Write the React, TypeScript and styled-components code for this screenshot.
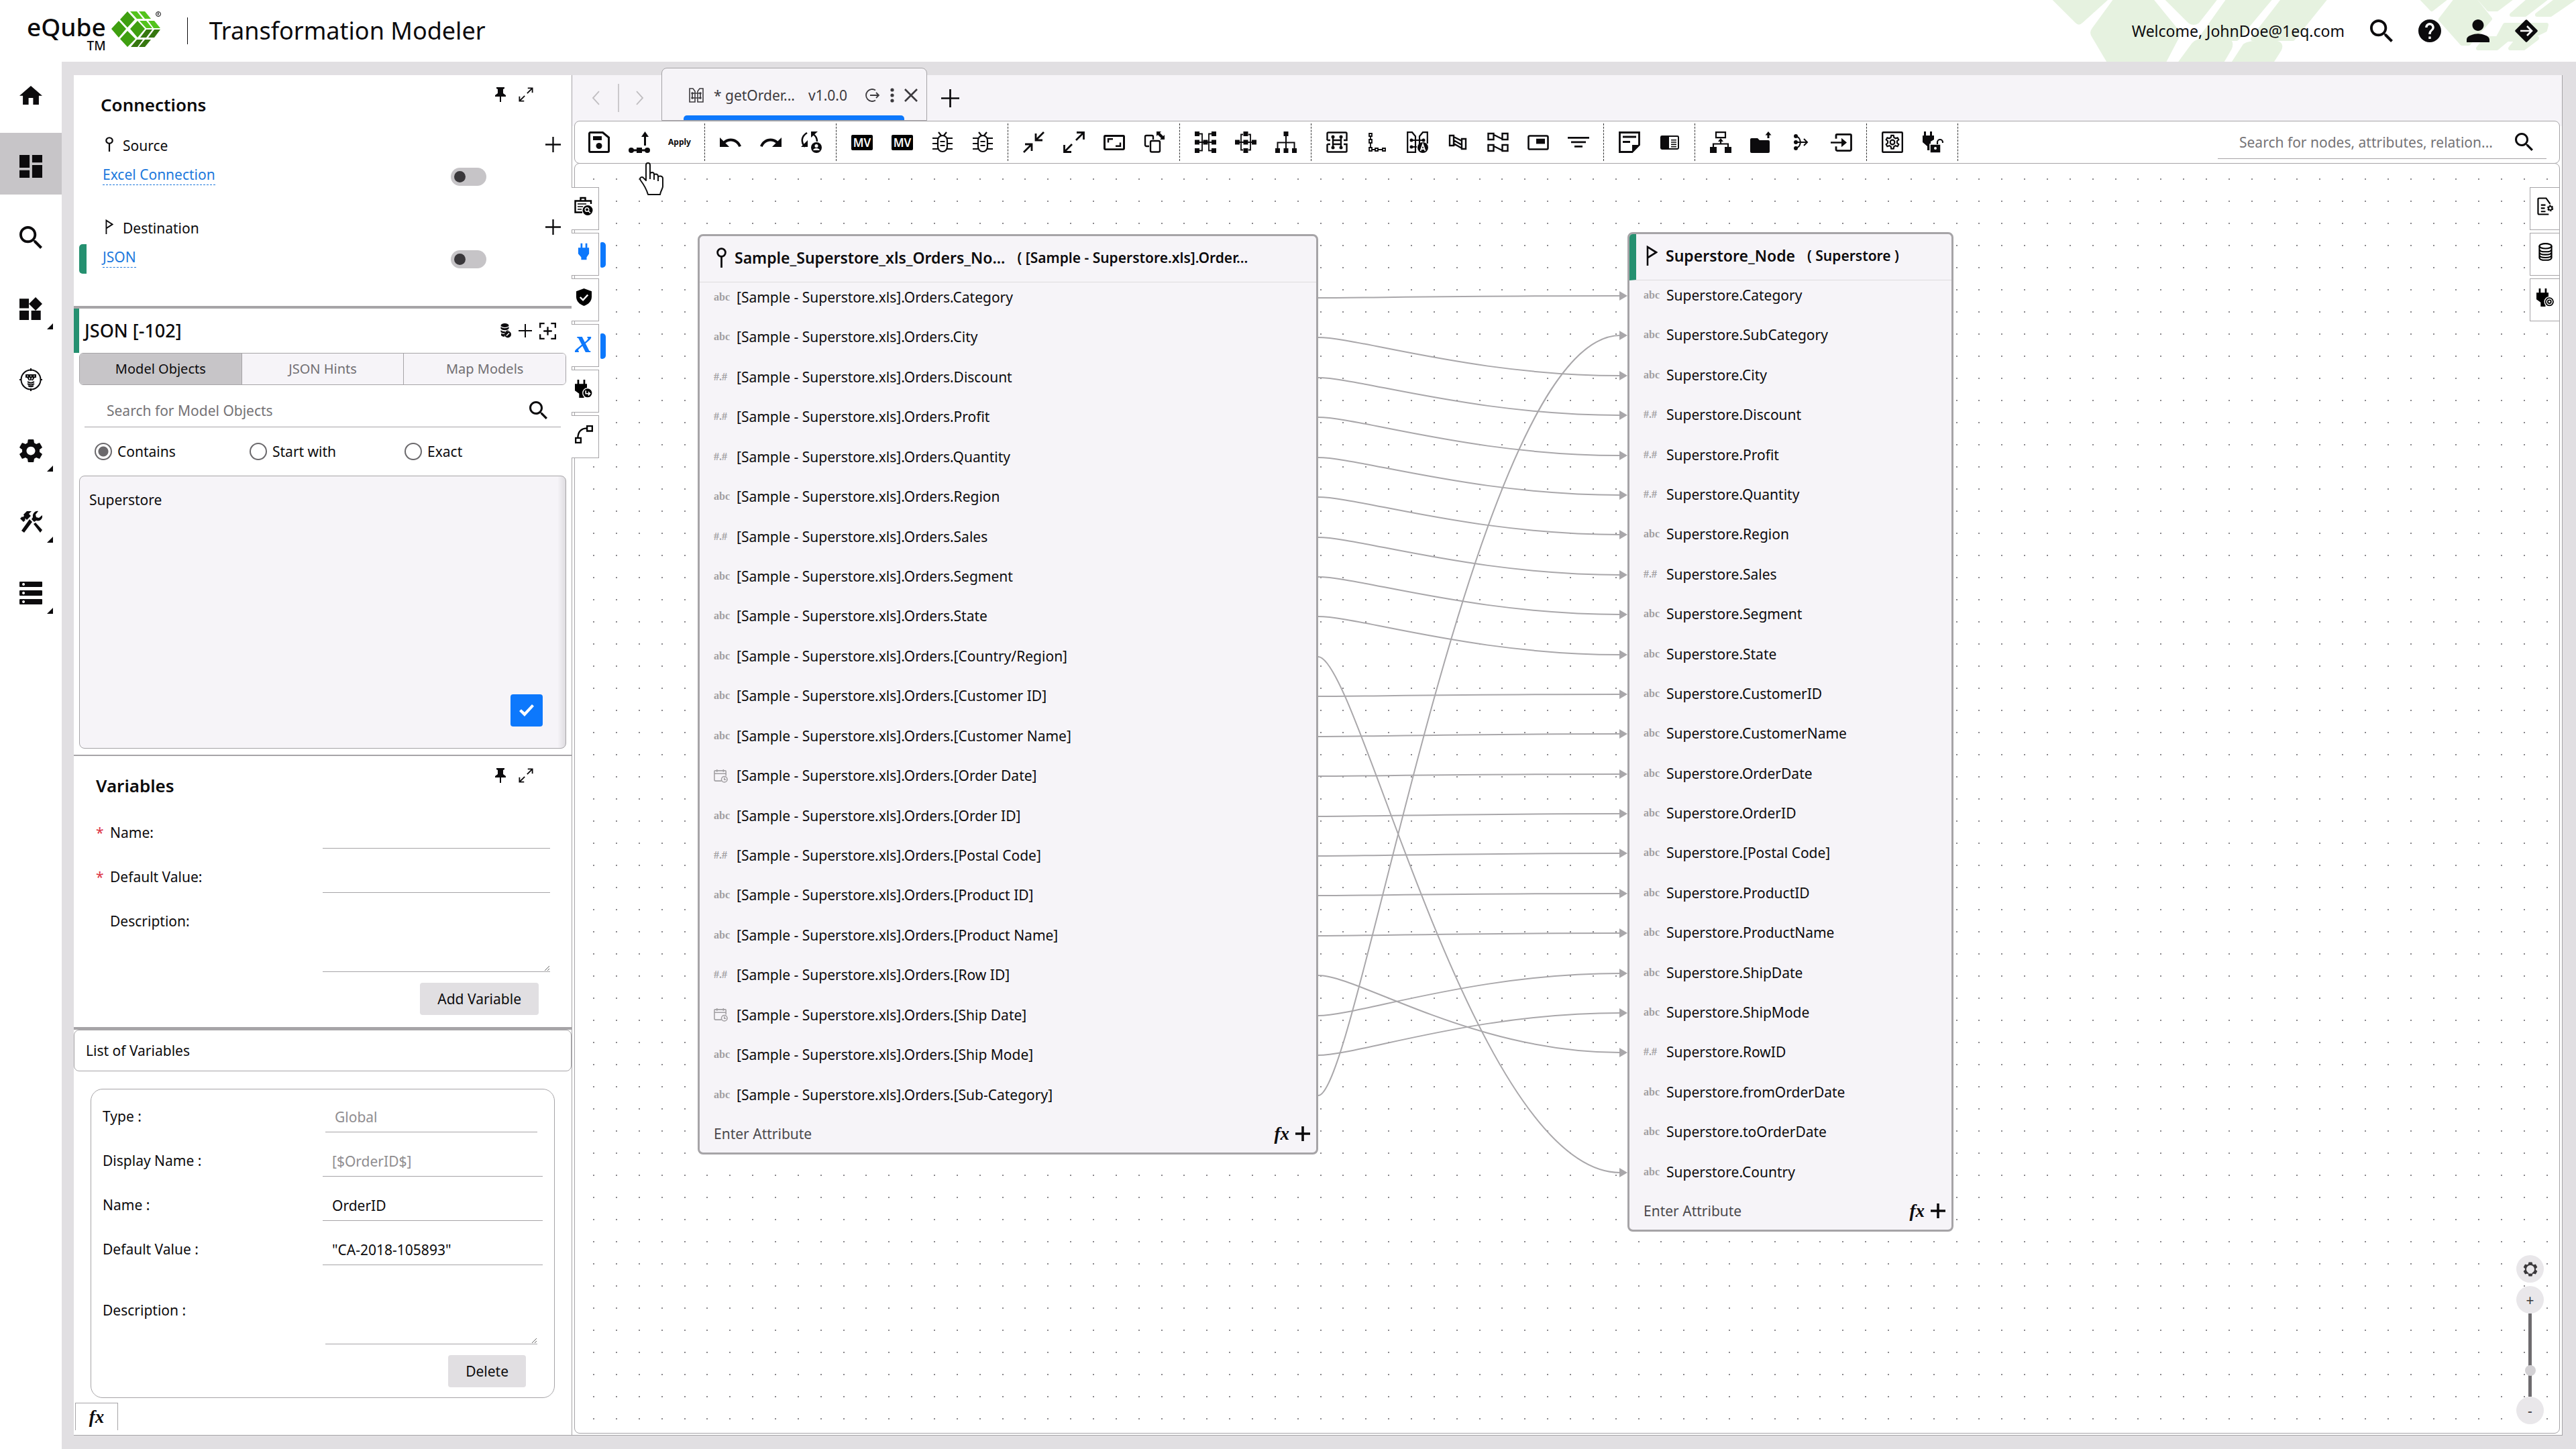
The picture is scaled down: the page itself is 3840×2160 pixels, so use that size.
import React from "react";
import styled, { createGlobalStyle, css } from "styled-components";

const ink = "#0c0b0d";
const line = "#a6a4a7";
const surface = "#f6f4f8";
const chrome = "#e1dfe2";
const blue = "#0d78fc";
const green = "#259070";

const GlobalStyle = createGlobalStyle`
  *, *::before, *::after { box-sizing: border-box; }
  body { margin: 0; background: #fff; }
  body, button, input, textarea {
    font-family: "Noto Sans", "Open Sans", sans-serif;
    font-size: 21px;
    line-height: 28px;
    color: ${ink};
  }
  button { border: 0; padding: 0; background: none; cursor: pointer; }
  h1, h2, h3, ul { margin: 0; padding: 0; font-weight: 600; }
  ul { list-style: none; font-weight: 400; }
  svg { display: block; flex: none; }
`;

/* ---------- icons ---------- */

type GlyphProps = { name: string; w?: number; h?: number };

const S = (p: React.SVGProps<SVGGElement>) => (
  <g fill="none" stroke="currentColor" strokeWidth={2.4} {...p} />
);

const plugBody = (
  <path d="M8 2h3v7h5V2h3v7h3v10l-4 6v4H9v-4l-5-6V9h4z" />
);

const bug = (
  <S strokeWidth={2.2}>
    <rect x="9" y="6" width="14" height="24" rx="7" />
    <path d="M10 1l4 5M22 1l-4 5M1 10h8M1 18h8M1 26h8M23 10h8M23 18h8M23 26h8M12.500 15h7M12.500 21h7" />
  </S>
);

const gearPath =
  "M19.14 12.94c.04-.3.06-.61.06-.94 0-.32-.02-.64-.07-.94l2.03-1.58c.18-.14.23-.41.12-.61l-1.92-3.32c-.12-.22-.37-.29-.59-.22l-2.39.96c-.5-.38-1.03-.7-1.62-.94l-.36-2.54c-.04-.24-.24-.41-.48-.41h-3.84c-.24 0-.43.17-.47.41l-.36 2.54c-.59.24-1.13.57-1.62.94l-2.39-.96c-.22-.08-.47 0-.59.22L2.74 8.87c-.12.21-.08.47.12.61l2.03 1.58c-.05.3-.09.63-.09.94s.02.64.07.94l-2.03 1.58c-.18.14-.23.41-.12.61l1.92 3.32c.12.22.37.29.59.22l2.39-.96c.5.38 1.03.7 1.62.94l.36 2.54c.05.24.24.41.48.41h3.84c.24 0 .44-.17.47-.41l.36-2.54c.59-.24 1.13-.56 1.62-.94l2.39.96c.22.08.47 0 .59-.22l1.92-3.32c.12-.22.07-.47-.12-.61l-2.01-1.58zM12 15.6c-1.98 0-3.6-1.62-3.6-3.6s1.62-3.6 3.6-3.6 3.6 1.62 3.6 3.6-1.62 3.6-3.6 3.6z";

const glyphs: Record<string, [string, React.ReactNode]> = {
  home: ["2 3 20 17", <path d="M10 20v-6h4v6h5v-8h3L12 3 2 12h3v8z" />],
  dashboard: ["3 3 18 18", <path d="M3 13h8V3H3v10zm0 8h8v-6H3v6zm10 0h8V11h-8v10zm0-18v6h8V3h-8z" />],
  search: [
    "3 3 17.500 17.500",
    <path d="M15.5 14h-.79l-.28-.27C15.41 12.59 16 11.11 16 9.5 16 5.91 13.09 3 9.500 3S3 5.91 3 9.500 5.91 16 9.500 16c1.61 0 3.09-.59 4.23-1.57l.27.28v.79l5 4.99L20.490 19l-4.990-5zm-6 0C7.010 14 5 11.990 5 9.500S7.010 5 9.500 5 14 7.010 14 9.500 11.990 14 9.500 14z" />,
  ],
  widgets: ["3 1.700 19.300 19.300", <path d="M13 13v8h8v-8h-8zM3 21h8v-8H3v8zM3 3v8h8V3H3zm13.66-1.31L11 7.34 16.66 13l5.66-5.66-5.66-5.65z" />],
  bot: [
    "0 0 34 34",
    <>
      <S strokeWidth={2}>
        <circle cx="17" cy="17" r="14.500" />
        <path d="M17 0v4M17 30v4M0 17h3M31 17h3M10 10h4v3h-4zM15 10h4v3h-4zM20 10h4v3h-4zM12 13l3 5M17 13v5M22 13l-3 5" />
        <path d="M12 20c3 2 7 2 10 0M12 23c3 2 7 2 10 0M13 26c3 2 5 2 8 0" />
      </S>
    </>,
  ],
  gear: ["2.600 2.400 18.800 19.200", <path d={gearPath} />],
  tools: [
    "0 0 34 34",
    <>
      <path d="M1 12l3-3 1 1 2-2-1-2 5-5h7l-4 4 3 3-6 6-2-2-1 1 1 1-3 3z" />
      <path d="M15 13l4 4L7 33l-4-3z" />
      <path d="M28 1l-4 5 1 4 4 1 5-4c1 5-3 10-9 8l-3 2-4-4 2-3c-1-6 4-10 8-9zM21 20l3-2 10 11-3 4z" />
    </>,
  ],
  server: [
    "0 0 34 34",
    <>
      {[0, 13, 26].map((y) => (
        <path key={y} fillRule="evenodd" d={`M1 ${y}h32a1 1 0 0 1 1 1v6a1 1 0 0 1-1 1H1a1 1 0 0 1-1-1v-6a1 1 0 0 1 1-1zM6 ${y + 2}a2 2 0 1 0 .1 0z`} />
      ))}
    </>,
  ],
  corner: ["0 0 9 9", <path d="M9 0v9H0z" />],
  help: ["2 2 20 20", <path d="M12 2C6.48 2 2 6.48 2 12s4.48 10 10 10 10-4.48 10-10S17.52 2 12 2zm1 17h-2v-2h2v2zm2.07-7.75l-.9.92C13.45 12.9 13 13.5 13 15h-2v-.5c0-1.1.45-2.1 1.17-2.83l1.24-1.26c.37-.36.59-.86.59-1.41 0-1.1-.9-2-2-2s-2 .9-2 2H8c0-2.21 1.79-4 4-4s4 1.79 4 4c0 .88-.36 1.68-.93 2.25z" />],
  person: ["4 4 16 16", <path d="M12 12c2.21 0 4-1.79 4-4s-1.79-4-4-4-4 1.79-4 4 1.79 4 4 4zm0 2c-2.67 0-8 1.34-8 4v2h16v-2c0-2.66-5.33-4-8-4z" />],
  leave: [
    "0 0 34 34",
    <>
      <path d="M15.500 1a2 2 0 0 1 3 0L33 15.500a2 2 0 0 1 0 3L18.500 33a2 2 0 0 1-3 0L1 18.500a2 2 0 0 1 0-3z" />
      <path d="M8 17h16M18 10l7 7-7 7" fill="none" stroke="#fff" strokeWidth={2.6} />
    </>,
  ],
  pin: ["0 0 16 22", <path d="M2 0h12v2l-2 1v6l4 3v2H9v8H7v-8H0v-2l4-3V3L2 2z" />],
  expand: ["0 0 24 24", <S strokeWidth={2}><path d="M15 1.500h7.500V9M22 2l-8 8M9 22.500H1.500V15M2 22l8-8" /></S>],
  source: ["0 0 14 28", <S strokeWidth={2.6}><circle cx="7" cy="7" r="5.500" /><path d="M7 12.500V28" /></S>],
  flag: ["0 0 17 28", <S strokeWidth={2.6}><path d="M2 28V2l13 7.500L2 17" /></S>],
  plus: ["0 0 24 24", <S strokeWidth={2.4}><path d="M12 0v24M0 12h24" /></S>],
  boldPlus: ["0 0 22 22", <S strokeWidth={3.6}><path d="M11 0v22M0 11h22" /></S>],
  dbEdit: [
    "0 0 16 22",
    <>
      <ellipse cx="6.500" cy="3" rx="6" ry="3" />
      <path d="M0.500 5c3 3 9 3 12 0v3c-3 3-9 3-12 0zM0.500 10c3 3 9 3 12 0-4 0-6 3-6 5-3 0-5-1-6-2zM1 15c2 1 4 1 5 1v4c-2 0-4-1-5-2z" />
      <circle cx="11" cy="16.500" r="5" />
      <path d="M9 18.500l4-4" stroke="#fff" strokeWidth={1.6} />
    </>,
  ],
  focus: ["0 0 26 26", <S><path d="M1.200 8V1.200H8M18 1.200h6.800V8M24.800 18v6.800H18M8 24.800H1.200V18M13 6.500v13M6.500 13h13" /></S>],
  check: ["0 0 22 20", <path d="M0 11l3-3 5 5L19 0l3 3L8 20z" />],
  save: [
    "0 0 32 32",
    <>
      <S strokeWidth={3}><path d="M3 1.500h18.500L30.500 9v20a1.500 1.500 0 0 1-1.500 1.500H3A1.500 1.500 0 0 1 1.500 29V3A1.500 1.500 0 0 1 3 1.500z" /></S>
      <path d="M7 7h13v6H7z" /><circle cx="16" cy="21.500" r="4.500" />
    </>,
  ],
  deploy: [
    "0 0 32 32",
    <>
      <path d="M24.500 0l5.500 8h-4v13h-3V8h-4z" />
      <circle cx="4" cy="28" r="4" /><circle cx="28" cy="28" r="4" />
      <path d="M4 26.500h24v3H4zM12 24h8v8h-8z" />
    </>,
  ],
  undo: ["2 7 20.500 9", <path d="M12.5 8c-2.65 0-5.05.99-6.9 2.6L2 7v9h9l-3.62-3.62c1.39-1.16 3.16-1.88 5.12-1.88 3.54 0 6.550 2.310 7.600 5.500l2.370-.780C21.080 11.030 17.150 8 12.500 8z" />],
  redo: ["1.500 7 20.500 9", <path d="M18.400 10.600C16.550 8.990 14.150 8 11.500 8c-4.650 0-8.580 3.030-9.960 7.220L3.900 16c1.050-3.190 4.050-5.500 7.600-5.500 1.950 0 3.730.72 5.120 1.880L13 16h9V7l-3.600 3.600z" />],
  userSync: [
    "0 0 32 32",
    <>
      <S strokeWidth={2.6}><path d="M10 2C2 7 0 15 7 23M19 4c5 3 6 7 6 11" /></S>
      <path d="M1 23h10V13zM16 0h10l-10 9z" />
      <circle cx="24" cy="24" r="8" />
      <circle cx="24" cy="21.500" r="2.500" fill="#fff" /><path d="M19 28c1-4 9-4 10 0z" fill="#fff" />
    </>,
  ],
  bug: ["0 0 32 32", bug],
  collapse: ["0 0 32 32", <S strokeWidth={2.8}><path d="M31 1L19 13M19 3v10h10M1 31l12-12M3 19h10v10" /></S>],
  expandBig: ["0 0 32 32", <S strokeWidth={2.8}><path d="M19 13L30 2M20 1.500h10.500V12M13 19L2 30M1.500 20v10.500H12" /></S>],
  aspect: ["0 0 32 24", <><S strokeWidth={3}><rect x="1.500" y="1.500" width="29" height="21" rx="1" /></S><S><path d="M7 12V6.500h7M25 12v5.500h-7" /></S></>],
  popout: [
    "0 0 32 32",
    <>
      <S><path d="M8 22H4a2 2 0 0 1-2-2V8a2 2 0 0 1 2-2h8a2 2 0 0 1 2 2v4" /><rect x="10" y="14" width="14" height="16.500" rx="2" /></S>
      <path d="M19 0h7l-2 2 5 5 2-2v7h-7l2-2-5-5-2 2z" />
    </>,
  ],
  mapAll: [
    "0 0 32 32",
    <>
      <path d="M0 0h7v7H0zM25 0h7v7h-7zM0 12.500h7v7H0zM12.500 12.500h7v7h-7zM25 12.500h7v7h-7zM0 25h7v7H0zM25 25h7v7h-7z" />
      <S strokeWidth={1.800}><path d="M7 3.500h4v25H7M25 3.500h-4v25h4M7 16h18" /></S>
    </>,
  ],
  mapCenter: [
    "0 0 32 32",
    <>
      <path d="M12.500 0h7v7h-7zM0 12.500h7v7H0zM12.500 12.500h7v7h-7zM25 12.500h7v7h-7zM12.500 25h7v7h-7z" />
      <S strokeWidth={1.800}><path d="M12 4.500H9v23h3M20 4.500h3v23h-3M7 16h18" /></S>
    </>,
  ],
  tree: [
    "0 0 32 32",
    <>
      <path d="M12.500 0h7v7h-7zM0 25h7v7H0zM12.500 25h7v7h-7zM25 25h7v7h-7z" />
      <S strokeWidth={2}><path d="M16 7v18M3.500 25v-8.500h25V25" /></S>
    </>,
  ],
  brackets: [
    "0 0 32 32",
    <>
      <S><path d="M1.500 13V3A1.500 1.500 0 0 1 3 1.500h26A1.500 1.500 0 0 1 30.500 3v10H26M1.500 13H6M1.500 19v10A1.500 1.500 0 0 0 3 30.500h26a1.500 1.500 0 0 0 1.500-1.500V19H26M1.500 19H6M10 8v16M22 8v16M10 13h12M10 19h12" /></S>
      <circle cx="10" cy="8" r="2.500" /><circle cx="22" cy="8" r="2.500" /><circle cx="10" cy="24" r="2.500" /><circle cx="22" cy="24" r="2.500" />
    </>,
  ],
  chain: ["0 0 32 32", <S strokeWidth={1.800}><path d="M6 2v26M4 27h24" /><path fill="#fff" d="M4 3h4v4H4zM4 12h4v5H4zM4 24h4v5H4zM13 25h4v4h-4zM24 25h4v4h-4z" /></S>],
  autoMap: [
    "0 0 32 32",
    <>
      <S strokeWidth={2.200}><path d="M1.200 1.200H8l5 6v23.600H1.200zM30.800 18V1.200H24l-5 6V20M7 13h18M7 23h8" /></S>
      <circle cx="7" cy="13" r="2.500" /><circle cx="25" cy="13" r="2.500" /><circle cx="7" cy="23" r="2.500" />
      <circle cx="24" cy="24" r="8" />
      <path d="M20.500 29l3.500-10 3.500 10M21.500 26h5" fill="none" stroke="#fff" strokeWidth={1.800} />
    </>,
  ],
  link: ["0 0 32 32", <S><path d="M4 6h6v15H4zM22 11h6v15h-6zM10 8l12 6M10 13l12 7M10 18l12 7" /></S>],
  crossMap: ["0 0 32 32", <S><path d="M1.500 3h8v9h-8zM22.500 3h8v9h-8zM1.500 20h8v9h-8zM22.500 20h8v9h-8zM10 5l12 6M10 22l12 6" /></S>],
  preview: ["0 0 32 24", <><S strokeWidth={2.600}><rect x="1.500" y="1.500" width="29" height="21" rx="2" /></S><path d="M13 6h13v8H13z" /></>],
  filter: ["0 0 32 16", <path d="M0 0h32v2.800H0zM5 6.500h22v2.800H5zM10 13h12v2.800H10z" />],
  note: ["0 0 32 32", <><S><path d="M1.500 1.500h29V20L20 30.500H1.500zM6 8h20M6 15.500h11" strokeWidth={2.800} /></S><path d="M20 31V20h11z" /></>],
  reader: ["0 0 28 22", <><S strokeWidth={2}><rect x="1" y="1" width="26" height="20" rx="1.500" /><path d="M16 7h8M16 10.500h8M16 14h8M16 17.500h8" strokeWidth={1.600} /></S><path d="M1 1h12v20H1z" /></>],
  hierarchy: [
    "0 0 32 32",
    <>
      <S strokeWidth={2.200}><path d="M9 1.200h14v8H9zM16 13v5M5 23v-4.500h22V23" /></S>
      <path d="M16 10l4 5h-8zM0 23h10v9H0zM22 23h10v9H22z" />
    </>,
  ],
  folderUp: ["0 0 32 32", <path d="M2 10h9l3 3h13a2 2 0 0 1 2 2v15a2 2 0 0 1-2 2H2a2 2 0 0 1-2-2V12a2 2 0 0 1 2-2zM27 0l4.500 5.500h-3V10h-3V5.500h-3z" />],
  merge: [
    "0 0 32 32",
    <>
      <S strokeWidth={2}><path d="M8 7c6 2 6 5 7 9M8 25c6-2 6-5 7-9M6 16h18M20 11l5 5-5 5" /></S>
      <circle cx="8" cy="7" r="3" /><circle cx="8" cy="16" r="3" /><circle cx="8" cy="25" r="3" />
    </>,
  ],
  login: ["0 0 32 28", <><S strokeWidth={2.800}><path d="M8 8V3a1.500 1.500 0 0 1 1.500-1.500h19.500A1.500 1.500 0 0 1 30.500 3v22a1.500 1.500 0 0 1-1.500 1.500H9.500A1.500 1.500 0 0 1 8 25v-5M0 14h18" /></S><path d="M16 7l8 7-8 7z" /></>],
  gearBox: [
    "0 0 32 32",
    <>
      <S><rect x="1.200" y="1.200" width="29.600" height="29.600" rx="1" /></S>
      <S strokeWidth={1.900} transform="translate(2.500 2.500) scale(1.125)">
        <path d="M10.500 3h3l.6 2.800 2 1.100 2.700-.9 1.500 2.600-2.100 1.900v2.500l2.100 1.900-1.500 2.600-2.700-.9-2 1.100-.6 2.800h-3l-.6-2.800-2-1.100-2.700.9-1.500-2.600 2.100-1.900v-2.500L3.700 8.600 5.200 6l2.700.9 2-1.100z" />
        <circle cx="12" cy="12" r="3" />
      </S>
    </>,
  ],
  plugUnlock: [
    "0 0 32 32",
    <>
      <path d="M3 0h3v6h6V0h3v6h3v6l-5 3v13H8v-6l-7-6V6h2z" />
      <path d="M12 19h16v13H12z" stroke="#fff" strokeWidth={1.500} />
      <path d="M23 19v-3a4 4 0 0 1 8 0v1" fill="none" stroke="currentColor" strokeWidth={2.200} />
      <circle cx="20" cy="25" r="2" fill="#fff" />
    </>,
  ],
  chevL: ["0 0 12 20", <S strokeWidth={1.800}><path d="M11 1L2 10l9 9" /></S>],
  chevR: ["0 0 12 20", <S strokeWidth={1.800}><path d="M1 1l9 9-9 9" /></S>],
  model: ["0 0 22 22", <><S strokeWidth={1.600}><path d="M1 1h5l3 4v16H1zM21 1h-5l-3 4v16h8zM5 8h12M5 15h12M5 8v7M17 8v7" /></S><circle cx="5" cy="8" r="1.800" /><circle cx="17" cy="8" r="1.800" /><circle cx="5" cy="15" r="1.800" /><circle cx="17" cy="15" r="1.800" /></>],
  exit: ["0 0 22 22", <S strokeWidth={1.800}><path d="M15 3.500A9 9 0 1 0 15 18.500M7 11h13M16 7l4 4-4 4" /></S>],
  kebab: ["0 0 6 22", <><circle cx="3" cy="3" r="2.600" /><circle cx="3" cy="11" r="2.600" /><circle cx="3" cy="19" r="2.600" /></>],
  close: ["0 0 20 20", <S strokeWidth={2.600}><path d="M1 1l18 18M19 1L1 19" /></S>],
  caseSearch: [
    "0 0 28 28",
    <>
      <S><path d="M25 11V6.500H1.500v17H12M9.500 6V2h7v4" /><path d="M5 11h13M5 15h8M5 19h6" strokeWidth={1.600} /></S>
      <circle cx="20" cy="20.500" r="7.500" /><circle cx="19" cy="19.500" r="2.800" fill="none" stroke="#fff" strokeWidth={1.400} /><path d="M21 21.500l3 3" stroke="#fff" strokeWidth={1.400} />
    </>,
  ],
  plug: ["3 0 20 31", plugBody],
  shield: ["0 0 24 30", <><path d="M12 0l12 5v9c0 8-5 13-12 16C5 27 0 22 0 14V5z" /><path d="M6 15l4.500 5L18 11" fill="none" stroke="#fff" strokeWidth={2.600} /></>],
  plugSwap: ["0 0 30 30", <><path d="M4 0h3v7h7V0h3v7h3v9l-5 7v7H7v-7l-7-5V7h4z" /><circle cx="21" cy="22" r="8" stroke="#fff" strokeWidth={1.500} /><path d="M18 18v5h7M22 20l3 3-3 3" fill="none" stroke="#fff" strokeWidth={1.800} /></>],
  plugGear: ["0 0 30 30", <><path d="M4 0h3v7h7V0h3v7h3v9l-5 7v7H7v-7l-7-5V7h4z" /><circle cx="21.500" cy="22" r="8" stroke="#fff" strokeWidth={1.500} /><circle cx="21.500" cy="22" r="4.500" fill="none" stroke="#fff" strokeWidth={1.600} /><circle cx="21.500" cy="22" r="1.600" fill="#fff" /></>],
  curve: ["0 0 28 28", <S><path d="M1.200 19.500h8v7.300h-8zM18.800 1.200h8v7.600h-8zM4.500 19C5 10 10 5 18 4.500" /></S>],
  docGear: ["0 0 26 28", <><S strokeWidth={2.200}><path d="M20 10L14 1.500H3A1.500 1.500 0 0 0 1.500 3v22A1.500 1.500 0 0 0 3 26.500h15M20 10v1M6 12h7M6 17h6M6 22h7" /></S><circle cx="20.500" cy="17" r="3.500" fill="none" stroke="currentColor" strokeWidth={2.600} strokeDasharray="2.600 1" /><circle cx="20.500" cy="17" r="2.600" fill="none" stroke="currentColor" strokeWidth={1.400} /></>],
  database: ["0 0 22 28", <S strokeWidth={2.200}><ellipse cx="11" cy="5" rx="9.500" ry="3.800" /><path d="M1.500 5v18c0 5 19 5 19 0V5M1.500 10c0 5 19 5 19 0M1.500 14.500c0 5 19 5 19 0M1.500 19c0 5 19 5 19 0" /></S>],
  date: ["0 0 22 22", <S strokeWidth={1.600}><path d="M12 19H3a2 2 0 0 1-2-2V4a1 1 0 0 1 1-1h16a1 1 0 0 1 1 1v7M1 7.500h18M5 1v4M15 1v4" /><circle cx="16.500" cy="16.500" r="4.500" /><path d="M16.500 14v3h2.500" /></S>],
  recenter: [
    "0 0 22 22",
    <>
      <circle cx="11" cy="11" r="7" fill="none" stroke="currentColor" strokeWidth={2} strokeDasharray="38 6" strokeDashoffset={-14} />
      {[0, 60, 120, 180, 240, 300].map((a) => (
        <path key={a} d="M8.500 0.500h5l1 4h-7z" transform={`rotate(${a} 11 11)`} />
      ))}
    </>,
  ],
};

const Glyph = ({ name, w = 32, h = w }: GlyphProps) => (
  <svg width={w} height={h} viewBox={glyphs[name][0]} fill="currentColor" preserveAspectRatio="none" aria-hidden="true">
    {glyphs[name][1]}
  </svg>
);

/* ---------- page frame ---------- */

const Page = styled.div`
  display: flex;
  flex-direction: column;
  min-height: 100vh;
`;

const TopBar = styled.header`
  position: relative;
  display: flex;
  align-items: center;
  height: 92px;
  padding: 0 57px 0 40px;
`;

const Backdrop = styled.svg`
  position: absolute;
  top: 0;
  right: 0;
`;

const Brand = styled.div`
  display: flex;
  gap: 7px;
  padding-right: 38px;
  border-right: 1px solid ${ink};
`;

const BrandWords = styled.div`
  display: flex;
  flex-direction: column;
  align-items: flex-end;
  height: 40px;
`;

const BrandName = styled.span`
  font-size: 37px;
  font-weight: 500;
  line-height: 28px;
`;

const BrandMark = styled.span`
  font-size: 19px;
  font-weight: 500;
  line-height: 28px;
`;

const LogoSlot = styled.div`
  height: 40px;
  svg { margin-top: -10px; }
`;

const AppTitle = styled.h1`
  flex: 1;
  padding-left: 32px;
  font-size: 36px;
  font-weight: 400;
  line-height: 44px;
`;

const UserTools = styled.div`
  position: relative;
  display: flex;
  align-items: center;
  gap: 38px;
  font-size: 23px;
`;

const IconButton = styled.button`
  display: flex;
  align-items: center;
  justify-content: center;
  color: inherit;
`;

const Shell = styled.div`
  display: flex;
  flex: 1;
`;

const Rail = styled.nav`
  display: flex;
  flex-direction: column;
  gap: 14px;
  width: 92px;
`;

const RailButton = styled.button<{ $active?: boolean }>`
  position: relative;
  display: flex;
  align-items: center;
  justify-content: center;
  width: 92px;
  height: 92px;
  padding-top: 7px;
  background: ${(p) => (p.$active ? "#c7c5c8" : "transparent")};
`;

const RailCorner = styled.span`
  position: absolute;
  right: 13px;
  bottom: 11px;
`;

const Body = styled.main`
  display: flex;
  flex: 1;
  min-width: 0;
  padding: 20px 20px 20px 18px;
  background: ${chrome};
`;

/* ---------- left column ---------- */

const SideColumn = styled.aside`
  display: flex;
  flex-direction: column;
  width: 742px;
  background: #fff;
  border-bottom: 1px solid ${line};
`;

const Section = styled.section<{ $rule?: number; $grow?: boolean }>`
  display: flex;
  flex-direction: column;
  flex: ${(p) => (p.$grow ? "1" : "none")};
  border-bottom: ${(p) => p.$rule ?? 0}px solid ${line};
`;

const SectionHead = styled.div<{ $inset: number }>`
  display: flex;
  align-items: flex-start;
  justify-content: space-between;
  height: 61px;
  padding: 18px 57px 0 ${(p) => p.$inset}px;
`;

const SectionTitle = styled.h2`
  padding-top: 11px;
  font-size: 26px;
  line-height: 30px;
`;

const HeadActions = styled.div<{ $gap: number }>`
  display: flex;
  align-items: center;
  gap: ${(p) => p.$gap}px;
`;

const Groups = styled.div`
  display: flex;
  flex-direction: column;
  gap: 40px;
  padding: 29px 0 48px;
`;

const GroupHead = styled.div`
  display: flex;
  align-items: center;
  gap: 14px;
  height: 30px;
  margin-bottom: 9px;
  padding: 0 16px 0 47px;
  svg { margin-bottom: 4px; }
  button { margin-left: auto; }
`;

const ConnectionRow = styled.div<{ $selected?: boolean }>`
  display: flex;
  align-items: center;
  justify-content: space-between;
  height: 44px;
  margin-left: 8px;
  padding: 0 127px 0 24px;
  border-left: 11px solid ${(p) => (p.$selected ? green : "transparent")};
  border-radius: 5px 0 0 5px;
`;

const ConnectionLink = styled.a`
  margin-bottom: 6px;
  color: #2079dd;
  line-height: 30px;
  border-bottom: 1px dashed #2079dd;
  text-decoration: none;
`;

const Toggle = styled.input`
  appearance: none;
  width: 53px;
  height: 27px;
  margin: 0;
  padding: 5px;
  border-radius: 14px;
  background: #c6c4c7;
  &::before {
    content: "";
    display: block;
    width: 17px;
    height: 17px;
    border-radius: 50%;
    background: #3a383b;
  }
`;

const JsonHead = styled.div`
  display: flex;
  align-items: center;
  justify-content: space-between;
  height: 66px;
  padding: 0 23px 0 8px;
  border-left: 8px solid ${green};
  h2 { font-size: 27px; font-weight: 500; line-height: 30px; }
`;

const Tabs = styled.div`
  display: flex;
  height: 48px;
  margin: 0 8px;
  border: 1px solid ${line};
  border-radius: 6px;
  overflow: hidden;
`;

const Tab = styled.button<{ $active?: boolean }>`
  flex: 1;
  background: ${(p) => (p.$active ? "#c7c5c8" : surface)};
  color: ${(p) => (p.$active ? ink : "#716f72")};
  font-size: 20px;
  & + & { border-left: 1px solid ${line}; }
`;

const searchField = css`
  display: flex;
  align-items: center;
  border-bottom: 1px solid ${line};
  input {
    flex: 1;
    min-width: 0;
    padding: 0;
    border: 0;
    outline: 0;
    background: none;
  }
  input::placeholder { color: #757376; opacity: 1; }
`;

const ObjectSearch = styled.div`
  ${searchField}
  height: 63px;
  margin: 0 16px;
  padding: 13px 20px 0 33px;
`;

const MatchOptions = styled.div`
  display: grid;
  grid-template-columns: repeat(3, 231px);
  align-items: center;
  height: 72px;
  padding-left: 31px;
`;

const RadioLabel = styled.label`
  display: flex;
  align-items: center;
  gap: 8px;
`;

const Radio = styled.input`
  appearance: none;
  width: 26px;
  height: 26px;
  margin: 0;
  border: 2px solid #6b696c;
  border-radius: 50%;
  &:checked {
    background: radial-gradient(circle, #6b696c 7px, transparent 8px);
  }
`;

const ObjectBox = styled.div`
  position: relative;
  flex: 1;
  margin: 0 8px 9px;
  padding: 21px 14px;
  border: 1px solid ${line};
  border-radius: 8px;
  background: linear-gradient(to left, #dedce0 0, ${surface} 12px);
`;

const ApplyButton = styled.button`
  position: absolute;
  right: 34px;
  bottom: 32px;
  display: flex;
  align-items: center;
  justify-content: center;
  width: 48px;
  height: 48px;
  border-radius: 4px;
  background: ${blue};
  color: #fff;
`;

const Form = styled.form`
  display: flex;
  flex-direction: column;
  padding: 13px 32px 18px 33px;
`;

const Card = styled.form`
  display: flex;
  flex-direction: column;
  margin: 26px 25px 7px;
  padding: 0 17px 15px;
  border: 1px solid ${line};
  border-radius: 18px;
`;

const Field = styled.div<{ $label: number; $tall?: boolean; $drop?: boolean; $required?: boolean }>`
  display: grid;
  grid-template-columns: ${(p) => p.$label}px 1fr;
  height: ${(p) => (p.$tall ? 116 : 66)}px;
  label {
    position: relative;
    padding-top: ${(p) => (p.$drop ? 51 : 26)}px;
    padding-left: ${(p) => (p.$label === 338 ? 21 : 0)}px;
  }
  label::before {
    content: ${(p) => (p.$required ? '"*"' : "none")};
    position: absolute;
    left: 0;
    color: #dc3545;
  }
`;

const fieldBox = css<{ $inset?: boolean }>`
  width: auto;
  min-width: 0;
  margin: ${(p) => (p.$inset ? "0 8px 0 4px" : "0")};
  padding: 18px 14px 0;
  border: 0;
  border-bottom: 1px solid ${line};
  outline: 0;
  background: none;
  &:disabled { color: #8f8d90; }
`;

const TextBox = styled.input<{ $inset?: boolean }>`
  ${fieldBox}
  height: 64px;
`;

const TextArea = styled.textarea<{ $inset?: boolean }>`
  ${fieldBox}
  height: 60px;
  align-self: end;
  resize: vertical;
`;

const GreyButton = styled.button<{ $push: number }>`
  align-self: flex-end;
  height: 48px;
  margin: 16px ${(p) => p.$push}px 0 0;
  padding: 0 26px;
  border-radius: 4px;
  background: ${chrome};
`;

const ListHeading = styled.h3`
  padding: 16px 17px;
  border: 1px solid ${line};
  border-radius: 8px;
  font-size: 21px;
  font-weight: 400;
`;

const FormulaTab = styled.button`
  width: 64px;
  height: 41px;
  margin: 0 0 7px 2px;
  border: 1px solid ${line};
  border-bottom: 0;
`;

const Fx = styled.span`
  font-family: "Liberation Serif", "DejaVu Serif", serif;
  font-size: 27px;
  font-style: italic;
  font-weight: 700;
`;

/* ---------- workspace ---------- */

const Workspace = styled.section`
  position: relative;
  display: flex;
  flex-direction: column;
  flex: 1;
  min-width: 0;
  padding: 0 3px 2px;
  border: 1px solid ${line};
  border-top: 0;
  background: linear-gradient(${surface} 76px, #fff 76px);
`;

const TabStrip = styled.div`
  display: flex;
  align-items: center;
  height: 68px;
  padding-left: 26px;
  color: #c0bec1;
`;

const StripDivider = styled.span`
  width: 2px;
  height: 42px;
  margin: 0 25px 0 27px;
  background: #cbc9cc;
`;

const DocumentTab = styled.div`
  position: relative;
  display: flex;
  align-items: center;
  width: 396px;
  height: 79px;
  margin: -12px 21px 0 26px;
  padding: 4px 13px 0 40px;
  border: 1px solid ${line};
  border-radius: 8px 8px 0 0;
  background: ${surface};
  color: #3c3a3e;
  &::after {
    content: "";
    position: absolute;
    left: 32px;
    right: 33px;
    bottom: 0;
    height: 7px;
    border-radius: 5px 5px 0 0;
    background: ${blue};
  }
`;

const TabName = styled.span`
  width: 141px;
  margin-left: 15px;
  white-space: nowrap;
`;

const TabActions = styled.span`
  display: flex;
  align-items: center;
  gap: 15px;
  margin-left: auto;
`;

const NewTab = styled(IconButton)`
  color: ${ink};
`;

const Toolbar = styled.div`
  display: flex;
  align-items: center;
  height: 64px;
  padding: 0 19px 0 6px;
  border: 1px solid ${line};
  border-radius: 8px;
  background: #fff;
`;

const ToolButton = styled.button`
  display: flex;
  align-items: center;
  justify-content: center;
  width: 60px;
  height: 56px;
  font-size: 12px;
  font-weight: 700;
`;

const ToolDivider = styled.span`
  height: 56px;
  margin: 0 8px 0 7px;
  border-left: 1px dashed #333;
`;

const Badge = styled.span`
  width: 32px;
  border-radius: 2px;
  background: #000;
  color: #fff;
  font-size: 17px;
  font-weight: 600;
  line-height: 23px;
`;

const NodeSearch = styled.div`
  ${searchField}
  width: 490px;
  height: 50px;
  margin-left: auto;
  padding: 0 20px 0 32px;
`;

const dotColumns = [28, 62, 96, 130, 164, 197, 231];

const Canvas = styled.div`
  position: relative;
  flex: 1;
  margin-top: -1px;
  border: 1px solid ${line};
  border-radius: 8px;
  background-color: #fff;
  background-image: ${dotColumns
    .map((x) => `radial-gradient(circle at ${x}px 23px, #8a888c 1px, transparent 1px)`)
    .join(", ")};
  background-size: 237px 33px;
`;

const Wires = styled.svg`
  position: absolute;
  inset: 0;
`;

const Dock = styled.div<{ $side: "left" | "right" }>`
  position: absolute;
  top: 35px;
  ${(p) => (p.$side === "left" ? "left: -5px;" : "right: 0;")}
  display: flex;
  flex-direction: column;
  gap: 4px;
`;

const DockButton = styled.button<{ $side: "left" | "right"; $active?: boolean }>`
  position: relative;
  display: flex;
  align-items: center;
  justify-content: center;
  width: ${(p) => (p.$side === "left" ? 41 : 44)}px;
  height: 64px;
  padding: ${(p) => (p.$side === "left" ? "0 4px 8px 0" : "0 0 8px 2px")};
  border: 1px solid ${line};
  border-${(p) => p.$side}-width: 0;
  background: #fff;
  color: ${(p) => (p.$active ? blue : "#000")};
  &::after {
    content: ${(p) => (p.$active ? '""' : "none")};
    position: absolute;
    top: 13px;
    right: -11px;
    width: 8px;
    height: 38px;
    border-radius: 2px 5px 5px 2px;
    background: ${blue};
  }
`;

const Variable = styled.span`
  font-family: "Liberation Serif", "DejaVu Serif", serif;
  font-size: 50px;
  font-style: italic;
  font-weight: 700;
  line-height: 30px;
  height: 36px;
`;

const NodeCard = styled.article<{ $left: number; $top: number; $width: number; $height: number }>`
  position: absolute;
  left: ${(p) => p.$left}px;
  top: ${(p) => p.$top}px;
  display: flex;
  flex-direction: column;
  width: ${(p) => p.$width}px;
  height: ${(p) => p.$height}px;
  border: 3px solid ${line};
  border-radius: 8px;
  background: ${surface};
`;

const NodeHead = styled.header<{ $accent?: boolean }>`
  display: flex;
  align-items: center;
  height: 69px;
  padding: 0 15px 4px ${(p) => (p.$accent ? 15 : 25)}px;
  border-bottom: 1px solid #dddbde;
  border-left: ${(p) => (p.$accent ? 10 : 0)}px solid ${green};
  border-top-left-radius: 5px;
`;

const NodeTitle = styled.h3`
  margin: 0 18px 0 12px;
  font-size: 23px;
  white-space: nowrap;
`;

const NodeModel = styled.span`
  font-size: 21px;
  font-weight: 600;
  white-space: nowrap;
`;

const Attributes = styled.ul`
  display: grid;
  grid-auto-rows: 1fr;
  flex: 1;
`;

const Attribute = styled.li`
  display: flex;
  align-items: flex-start;
  padding: 8px 0 0 21px;
  white-space: nowrap;
`;

const TypeMark = styled.span`
  display: flex;
  align-items: center;
  width: 34px;
  height: 28px;
  color: #a09ea1;
  font-family: "Liberation Serif", "DejaVu Serif", serif;
  font-size: 16px;
  font-weight: 700;
`;

const NodeFoot = styled.div`
  display: flex;
  align-items: flex-start;
  gap: 9px;
  height: 49px;
  padding: 7px 9px 0 21px;
  input {
    flex: 1;
    min-width: 0;
    padding: 0;
    border: 0;
    background: none;
  }
  input::placeholder { color: #4b494c; opacity: 1; }
  button { height: 28px; }
`;

const ZoomPanel = styled.div`
  position: absolute;
  right: 23px;
  bottom: 13px;
  display: flex;
  flex-direction: column;
  align-items: center;
`;

const RoundButton = styled.button<{ $gap?: number }>`
  display: flex;
  align-items: center;
  justify-content: center;
  width: 41px;
  height: 41px;
  margin-bottom: ${(p) => p.$gap ?? 0}px;
  border-radius: 50%;
  background: #e9e7ea;
  color: #3a383b;
`;

const ZoomSlider = styled.input`
  appearance: none;
  writing-mode: vertical-lr;
  direction: rtl;
  width: 16px;
  height: 124px;
  margin: 0;
  background: linear-gradient(#6d6b6e, #6d6b6e) center / 5px 100% no-repeat;
  &::-webkit-slider-thumb {
    appearance: none;
    width: 16px;
    height: 16px;
    border-radius: 50%;
    background: #d3d1d4;
  }
`;

const Pointer = styled.svg`
  position: absolute;
  left: 99px;
  top: 130px;
`;

/* ---------- data ---------- */

type Kind = "abc" | "num" | "date";

const sourceFields: [Kind, string][] = [
  ["abc", "Category"],
  ["abc", "City"],
  ["num", "Discount"],
  ["num", "Profit"],
  ["num", "Quantity"],
  ["abc", "Region"],
  ["num", "Sales"],
  ["abc", "Segment"],
  ["abc", "State"],
  ["abc", "[Country/Region]"],
  ["abc", "[Customer ID]"],
  ["abc", "[Customer Name]"],
  ["date", "[Order Date]"],
  ["abc", "[Order ID]"],
  ["num", "[Postal Code]"],
  ["abc", "[Product ID]"],
  ["abc", "[Product Name]"],
  ["num", "[Row ID]"],
  ["date", "[Ship Date]"],
  ["abc", "[Ship Mode]"],
  ["abc", "[Sub-Category]"],
];

const targetFields: [Kind, string][] = [
  ["abc", "Category"],
  ["abc", "SubCategory"],
  ["abc", "City"],
  ["num", "Discount"],
  ["num", "Profit"],
  ["num", "Quantity"],
  ["abc", "Region"],
  ["num", "Sales"],
  ["abc", "Segment"],
  ["abc", "State"],
  ["abc", "CustomerID"],
  ["abc", "CustomerName"],
  ["abc", "OrderDate"],
  ["abc", "OrderID"],
  ["abc", "[Postal Code]"],
  ["abc", "ProductID"],
  ["abc", "ProductName"],
  ["abc", "ShipDate"],
  ["abc", "ShipMode"],
  ["num", "RowID"],
  ["abc", "fromOrderDate"],
  ["abc", "toOrderDate"],
  ["abc", "Country"],
];

/* Index of the target attribute that each source attribute feeds. */
const mapping = [0, 2, 3, 4, 5, 6, 7, 8, 9, 22, 10, 11, 12, 13, 14, 15, 16, 19, 17, 18, 1];

const toolGroups: [string, string][][] = [
  [["save", "Save"], ["deploy", "Deploy"], ["Apply", "Apply"]],
  [["undo", "Undo"], ["redo", "Redo"], ["userSync", "Refresh user"]],
  [["MV", "Model view"], ["MV", "Map view"], ["bug", "Debug"], ["bug", "Debug all"]],
  [["collapse", "Collapse"], ["expandBig", "Expand"], ["aspect", "Fit"], ["popout", "Pop out"]],
  [["mapAll", "Map all"], ["mapCenter", "Map center"], ["tree", "Tree"]],
  [["brackets", "Bracket"], ["chain", "Chain"], ["autoMap", "Auto map"], ["link", "Link"], ["crossMap", "Cross map"], ["preview", "Preview"], ["filter", "Filter"]],
  [["note", "Note"], ["reader", "Reader"]],
  [["hierarchy", "Hierarchy"], ["folderUp", "Export"], ["merge", "Merge"], ["login", "Import"]],
  [["gearBox", "Settings"], ["plugUnlock", "Unlock connection"]],
];

const toolSizes: Record<string, [number, number]> = {
  undo: [32, 14],
  redo: [32, 14],
  aspect: [32, 23],
  preview: [32, 23],
  filter: [32, 16],
  reader: [28, 21],
  login: [32, 27],
};

const railItems: [string, string, number, boolean][] = [
  ["home", "Home", 28, false],
  ["dashboard", "Dashboard", 34, false],
  ["search", "Search", 34, false],
  ["widgets", "Widgets", 34, true],
  ["bot", "Assistant", 34, false],
  ["gear", "Settings", 34, true],
  ["tools", "Tools", 34, true],
  ["server", "Servers", 34, true],
];

/* ---------- parts ---------- */

const Logo = () => (
  <svg width="76" height="56" viewBox="166 16 76 56" aria-hidden="true">
    <g fill="#3f9f10">
      <path d="M191 17l11 12-11 12-11-12zM178 31l11 12-11 13-11-13zM206 31l11 12-11 13-11-13zM191 46l12 12-12 12-11-12z" />
    </g>
    <path fill="#53c31c" d="M195 17h10l9 11h-9zM208 17h9l9 11h-9zM209 31h10l9 11h-9zM222 31h9l9 11h-10z" />
    <path fill="#36770f" d="M219 44h9l-9 12h-9zM231 44h9l-9 12h-9zM205 59h9l-8 11h-10zM217 59h9l-9 11h-9z" />
    <circle cx="237" cy="21" r="3.500" fill="none" stroke={ink} strokeWidth="1" />
    <path d="M236 23v-4h1.500v2H236M237 21l1 2" fill="none" stroke={ink} strokeWidth=".6" />
  </svg>
);

const HeaderArt = () => (
  <Backdrop width="800" height="92" viewBox="3040 0 800 92" aria-hidden="true">
    <g fill="#e6f2e0" stroke="#e6f2e0" strokeWidth="6" strokeLinejoin="round">
      <path d="M3060-4h82l-40 36q-3 3-6 0z" />
      <path d="M3156-4h48l44 54-24 46h-78l-26-44q-2-4 1-8z" />
      <path d="M3228-4h76l-28 36q-6 4-12 0z" />
      <path d="M3324-4h62l-52 62h-54z" />
      <path d="M3406-4h62l-50 62h-60z" />
      <path d="M3248 96l22-30q6-6 16-6h34q8 2 4 12l-14 24zM3328 96l18-28q6-4 16-4h32q8 2 4 10l-14 22z" />
      <path d="M3608-4h40l-23 18z" />
      <path d="M3662-2h26l24 30-32 37h-10l-32-36z" />
      <path d="M3694-4h52l-24 18h-12z" />
      <path d="M3774-4h24l-34 26h-20zM3816-4h24l-38 26h-20z" />
      <path d="M3734 37h62l-2 8-30 14h-42zM3706 57h34l-18 15h-28zM3754 57h28l-20 15h-20z" />
    </g>
  </Backdrop>
);

const Mark = ({ kind }: { kind: Kind }) => (
  <TypeMark>{kind === "date" ? <Glyph name="date" w={21} /> : kind === "abc" ? "abc" : "#.#"}</TypeMark>
);

const NodeBody = ({ fields, prefix, label }: { fields: [Kind, string][]; prefix: string; label: string }) => (
  <>
    <Attributes>
      {fields.map(([kind, name]) => (
        <Attribute key={name}>
          <Mark kind={kind} />
          {prefix + name}
        </Attribute>
      ))}
    </Attributes>
    <NodeFoot>
      <input aria-label={label} placeholder="Enter Attribute" />
      <IconButton aria-label="Formula"><Fx>fx</Fx></IconButton>
      <IconButton aria-label="Add attribute"><Glyph name="boldPlus" w={22} /></IconButton>
    </NodeFoot>
  </>
);

const Connectors = () => {
  const x0 = 1108;
  const x1 = 1568;
  return (
    <Wires width="100%" height="100%" fill="none" stroke="#a9a7aa" strokeWidth="2" aria-hidden="true">
      {mapping.map((target, i) => {
        const y0 = Math.round(200 + (i * 1248) / 21);
        const y1 = Math.round(197 + (target * 1366) / 23);
        return (
          <g key={i}>
            <path d={`M${x0} ${y0}C${x0 + 60} ${y0} ${x1 - 228} ${y1} ${x1 - 10} ${y1}`} />
            <path d={`M${x1 - 11} ${y1 - 7}v14l12-7z`} fill="#a9a7aa" stroke="none" />
          </g>
        );
      })}
    </Wires>
  );
};

const dockLeft: [string, string, number, number, boolean][] = [
  ["caseSearch", "Inspect", 28, 28, false],
  ["plug", "Connections", 18, 28, true],
  ["shield", "Validation", 23, 26, false],
  ["x", "Variables", 28, 28, true],
  ["plugSwap", "Connection swap", 27, 27, false],
  ["curve", "Relations", 27, 27, false],
];

const dockRight: [string, string, number, number][] = [
  ["docGear", "Document settings", 25, 27],
  ["database", "Database", 21, 27],
  ["plugGear", "Connection settings", 27, 27],
];

export default function App() {
  return (
    <Page>
      <GlobalStyle />
      <TopBar>
        <HeaderArt />
        <Brand>
          <BrandWords>
            <BrandName>eQube</BrandName>
            <BrandMark>TM</BrandMark>
          </BrandWords>
          <LogoSlot><Logo /></LogoSlot>
        </Brand>
        <AppTitle>Transformation Modeler</AppTitle>
        <UserTools>
          <span>Welcome, JohnDoe@1eq.com</span>
          <IconButton aria-label="Search"><Glyph name="search" w={34} /></IconButton>
          <IconButton aria-label="Help"><Glyph name="help" w={34} /></IconButton>
          <IconButton aria-label="Account"><Glyph name="person" w={34} /></IconButton>
          <IconButton aria-label="Sign out"><Glyph name="leave" w={34} /></IconButton>
        </UserTools>
      </TopBar>
      <Shell>
        <Rail>
          {railItems.map(([name, label, h, more]) => (
            <RailButton key={name} aria-label={label} $active={name === "dashboard"}>
              <Glyph name={name} w={34} h={h} />
              {more && <RailCorner><Glyph name="corner" w={9} /></RailCorner>}
            </RailButton>
          ))}
        </Rail>
        <Body>
          <SideColumn>
            <Section $rule={4}>
              <SectionHead $inset={40}>
                <SectionTitle>Connections</SectionTitle>
                <HeadActions $gap={19}>
                  <IconButton aria-label="Pin connections"><Glyph name="pin" w={16} h={22} /></IconButton>
                  <IconButton aria-label="Expand connections"><Glyph name="expand" w={22} /></IconButton>
                </HeadActions>
              </SectionHead>
              <Groups>
                <div>
                  <GroupHead>
                    <Glyph name="source" w={12} h={22} />
                    Source
                    <IconButton aria-label="Add source"><Glyph name="plus" w={23} /></IconButton>
                  </GroupHead>
                  <ConnectionRow>
                    <ConnectionLink href="#excel">Excel Connection</ConnectionLink>
                    <Toggle type="checkbox" aria-label="Enable Excel Connection" />
                  </ConnectionRow>
                </div>
                <div>
                  <GroupHead>
                    <Glyph name="flag" w={12} h={22} />
                    Destination
                    <IconButton aria-label="Add destination"><Glyph name="plus" w={23} /></IconButton>
                  </GroupHead>
                  <ConnectionRow $selected>
                    <ConnectionLink href="#json">JSON</ConnectionLink>
                    <Toggle type="checkbox" aria-label="Enable JSON" />
                  </ConnectionRow>
                </div>
              </Groups>
            </Section>

            <Section $rule={2} $grow>
              <JsonHead>
                <h2>JSON [-102]</h2>
                <HeadActions $gap={11}>
                  <IconButton aria-label="Edit data"><Glyph name="dbEdit" w={16} h={22} /></IconButton>
                  <IconButton aria-label="Add object"><Glyph name="plus" w={20} /></IconButton>
                  <IconButton aria-label="Focus"><Glyph name="focus" w={25} /></IconButton>
                </HeadActions>
              </JsonHead>
              <Tabs>
                <Tab $active>Model Objects</Tab>
                <Tab>JSON Hints</Tab>
                <Tab>Map Models</Tab>
              </Tabs>
              <ObjectSearch>
                <input aria-label="Search for Model Objects" placeholder="Search for Model Objects" />
                <IconButton aria-label="Run object search"><Glyph name="search" w={27} /></IconButton>
              </ObjectSearch>
              <MatchOptions>
                <RadioLabel><Radio type="radio" name="match" defaultChecked />Contains</RadioLabel>
                <RadioLabel><Radio type="radio" name="match" />Start with</RadioLabel>
                <RadioLabel><Radio type="radio" name="match" />Exact</RadioLabel>
              </MatchOptions>
              <ObjectBox>
                Superstore
                <ApplyButton aria-label="Apply selection"><Glyph name="check" w={22} h={18} /></ApplyButton>
              </ObjectBox>
            </Section>

            <Section $rule={4}>
              <SectionHead $inset={33}>
                <SectionTitle>Variables</SectionTitle>
                <HeadActions $gap={19}>
                  <IconButton aria-label="Pin variables"><Glyph name="pin" w={16} h={22} /></IconButton>
                  <IconButton aria-label="Expand variables"><Glyph name="expand" w={22} /></IconButton>
                </HeadActions>
              </SectionHead>
              <Form>
                <Field $label={338} $required>
                  <label htmlFor="new-name">Name:</label>
                  <TextBox id="new-name" />
                </Field>
                <Field $label={338} $required>
                  <label htmlFor="new-default">Default Value:</label>
                  <TextBox id="new-default" />
                </Field>
                <Field $label={338} $tall>
                  <label htmlFor="new-description">Description:</label>
                  <TextArea id="new-description" />
                </Field>
                <GreyButton type="button" $push={17}>Add Variable</GreyButton>
              </Form>
            </Section>

            <Section>
              <ListHeading>List of Variables</ListHeading>
              <Card>
                <Field $label={328}>
                  <label htmlFor="var-type">Type :</label>
                  <TextBox id="var-type" defaultValue="Global" disabled $inset />
                </Field>
                <Field $label={328}>
                  <label htmlFor="var-display">Display Name :</label>
                  <TextBox id="var-display" defaultValue="[$OrderID$]" disabled />
                </Field>
                <Field $label={328}>
                  <label htmlFor="var-name">Name :</label>
                  <TextBox id="var-name" defaultValue="OrderID" />
                </Field>
                <Field $label={328}>
                  <label htmlFor="var-default">Default Value :</label>
                  <TextBox id="var-default" defaultValue={'"CA-2018-105893"'} />
                </Field>
                <Field $label={328} $tall $drop>
                  <label htmlFor="var-description">Description :</label>
                  <TextArea id="var-description" $inset />
                </Field>
                <GreyButton type="button" $push={25}>Delete</GreyButton>
              </Card>
              <FormulaTab aria-label="Formula"><Fx>fx</Fx></FormulaTab>
            </Section>
          </SideColumn>

          <Workspace>
            <TabStrip>
              <IconButton aria-label="Previous tab"><Glyph name="chevL" w={12} h={22} /></IconButton>
              <StripDivider />
              <IconButton aria-label="Next tab"><Glyph name="chevR" w={12} h={22} /></IconButton>
              <DocumentTab>
                <Glyph name="model" w={22} />
                <TabName>* getOrder...</TabName>
                <span>v1.0.0</span>
                <TabActions>
                  <IconButton aria-label="Check out"><Glyph name="exit" w={22} /></IconButton>
                  <IconButton aria-label="More"><Glyph name="kebab" w={6} h={22} /></IconButton>
                  <IconButton aria-label="Close tab"><Glyph name="close" w={20} /></IconButton>
                </TabActions>
              </DocumentTab>
              <NewTab aria-label="New tab"><Glyph name="plus" w={27} /></NewTab>
            </TabStrip>
            <Toolbar>
              {toolGroups.map((group, g) => (
                <React.Fragment key={g}>
                  {group.map(([name, label], i) => {
                    const [w, h] = toolSizes[name] ?? [32, 32];
                    return (
                      <ToolButton key={i} aria-label={label}>
                        {name === "MV" ? <Badge>MV</Badge> : name === "Apply" ? name : <Glyph name={name} w={w} h={h} />}
                      </ToolButton>
                    );
                  })}
                  <ToolDivider />
                </React.Fragment>
              ))}
              <NodeSearch>
                <input aria-label="Search the model" placeholder="Search for nodes, attributes, relation..." />
                <IconButton aria-label="Run search"><Glyph name="search" w={27} /></IconButton>
              </NodeSearch>
            </Toolbar>
            <Canvas>
              <Connectors />
              <NodeCard $left={183} $top={105} $width={925} $height={1372}>
                <NodeHead>
                  <Glyph name="source" w={15} h={30} />
                  <NodeTitle>Sample_Superstore_xls_Orders_No...</NodeTitle>
                  <NodeModel>( [Sample - Superstore.xls].Order...</NodeModel>
                </NodeHead>
                <NodeBody fields={sourceFields} prefix="[Sample - Superstore.xls].Orders." label="New source attribute" />
              </NodeCard>
              <NodeCard $left={1569} $top={102} $width={486} $height={1490}>
                <NodeHead $accent>
                  <Glyph name="flag" w={17} h={30} />
                  <NodeTitle>Superstore_Node</NodeTitle>
                  <NodeModel>( Superstore )</NodeModel>
                </NodeHead>
                <NodeBody fields={targetFields} prefix="Superstore." label="New target attribute" />
              </NodeCard>
              <Dock $side="left">
                {dockLeft.map(([name, label, w, h, active]) => (
                  <DockButton key={name} $side="left" $active={active} aria-label={label}>
                    {name === "x" ? <Variable>x</Variable> : <Glyph name={name} w={w} h={h} />}
                  </DockButton>
                ))}
              </Dock>
              <Dock $side="right">
                {dockRight.map(([name, label, w, h]) => (
                  <DockButton key={name} $side="right" aria-label={label}><Glyph name={name} w={w} h={h} /></DockButton>
                ))}
              </Dock>
              <ZoomPanel>
                <RoundButton $gap={5} aria-label="Recenter"><Glyph name="recenter" w={22} /></RoundButton>
                <RoundButton aria-label="Zoom in">+</RoundButton>
                <ZoomSlider type="range" min={0} max={100} defaultValue={29} aria-label="Zoom level" />
                <RoundButton aria-label="Zoom out">-</RoundButton>
              </ZoomPanel>
            </Canvas>
            <Pointer width="38" height="49" viewBox="0 0 38 49" aria-hidden="true">
              <path
                d="M11 4c0-4 6-4 6 0v14c0-4 6-4 6 0v2c0-4 6-3 6 1v2c0-4 7-3 7 1v12c0 3-3 6-4 12H14C12 41 9 35 3 27c-3-4 2-7 5-3l3 3z"
                fill="#fff" stroke="#111" strokeWidth="2" strokeLinejoin="round"
              />
              <path d="M17 18v7M23 20v6M29 23v5" stroke="#111" strokeWidth="2" />
            </Pointer>
          </Workspace>
        </Body>
      </Shell>
    </Page>
  );
}
